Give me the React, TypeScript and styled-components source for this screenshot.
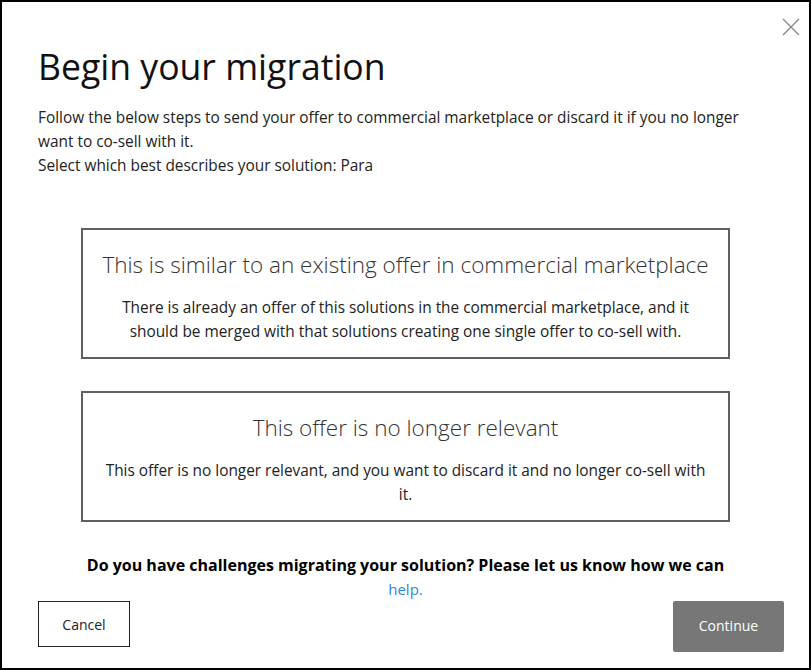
import React from "react";
import styled, { createGlobalStyle } from "styled-components";

const Global = createGlobalStyle`
  html, body { margin: 0; padding: 0; background: #fff; }
  body { font-family: "Segoe UI", "Open Sans", "Noto Sans", sans-serif; color: #1b1b1b; }
  * { box-sizing: border-box; }
`;

const Dialog = styled.div`
  position: relative;
  width: 811px;
  height: 670px;
  border: 2px solid #000;
  background: #fff;
  padding: 0 25px 0 36px;
  display: flex;
  flex-direction: column;
`;

const Close = styled.button`
  position: absolute;
  top: 16px;
  right: 9px;
  width: 18px;
  height: 18px;
  padding: 0;
  border: none;
  background: transparent;
  display: flex;
`;

const Title = styled.h1`
  margin: 40px 0 0 0;
  font-size: 35.6px;
  font-weight: 400;
  line-height: 48px;
  color: #111;
`;

const Intro = styled.p`
  margin: 16px 0 0 0;
  max-width: 715px;
  font-size: 15.4px;
  line-height: 24px;
  color: #222;
`;

const Cards = styled.div`
  display: flex;
  flex-direction: column;
  align-items: center;
  gap: 32px;
  margin: 50px 0 0 -36px;
  width: 807px;
`;

const Card = styled.button`
  width: 649px;
  height: 131px;
  border: 2px solid #5f5f5f;
  background: #fff;
  padding: 19px 0 0;
  display: flex;
  flex-direction: column;
  align-items: center;
  font-family: inherit;
  cursor: pointer;
`;

const CardTitle = styled.div`
  font-size: 22.5px;
  font-weight: 300;
  line-height: 32px;
  color: #333;
  white-space: nowrap;
`;

const CardText = styled.div`
  margin-top: 15px;
  padding: 0 20px;
  font-size: 15.4px;
  line-height: 24px;
  color: #222;
  text-align: center;
`;

const Help = styled.div`
  margin: 31px 0 0 -36px;
  width: 807px;
  text-align: center;
  font-size: 16px;
  line-height: 24px;
  padding: 0 60px;
`;

const HelpStrong = styled.strong`
  font-weight: 700;
  color: #000;
`;

const HelpLink = styled.a`
  color: #2b88d8;
  text-decoration: none;
  display: block;
  font-size: 15px;
`;

const Footer = styled.div`
  display: flex;
  justify-content: space-between;
  align-items: flex-start;
`;

const CancelButton = styled.button`
  width: 92px;
  height: 46px;
  background: #fff;
  border: 1px solid #222;
  font-family: inherit;
  font-size: 14px;
  color: #222;
`;

const ContinueButton = styled.button`
  width: 111px;
  height: 51px;
  background: #777;
  border: none;
  border-radius: 2px;
  font-family: inherit;
  font-size: 14px;
  color: #fff;
  padding-bottom: 3px;
`;

export default function App() {
  return (
    <>
      <Global />
      <Dialog>
        <Close aria-label="Close">
          <svg width="18" height="18" viewBox="0 0 18 18">
            <path d="M1 1L17 17M17 1L1 17" stroke="#8a8a8a" strokeWidth="1.4" fill="none" />
          </svg>
        </Close>
        <Title>Begin your migration</Title>
        <Intro>
          Follow the below steps to send your offer to commercial marketplace or discard it if you no longer want to co-sell with it.
          <br />
          Select which best describes your solution: Para
        </Intro>
        <Cards>
          <Card>
            <CardTitle>This is similar to an existing offer in commercial marketplace</CardTitle>
            <CardText>
              There is already an offer of this solutions in the commercial marketplace, and it should be merged with that solutions creating one single offer to co-sell with.
            </CardText>
          </Card>
          <Card>
            <CardTitle>This offer is no longer relevant</CardTitle>
            <CardText>
              This offer is no longer relevant, and you want to discard it and no longer co-sell with it.
            </CardText>
          </Card>
        </Cards>
        <Help>
          <HelpStrong>Do you have challenges migrating your solution? Please let us know how we can</HelpStrong>
          <HelpLink href="#">help.</HelpLink>
        </Help>
        <Footer>
          <CancelButton>Cancel</CancelButton>
          <ContinueButton>Continue</ContinueButton>
        </Footer>
      </Dialog>
    </>
  );
}
